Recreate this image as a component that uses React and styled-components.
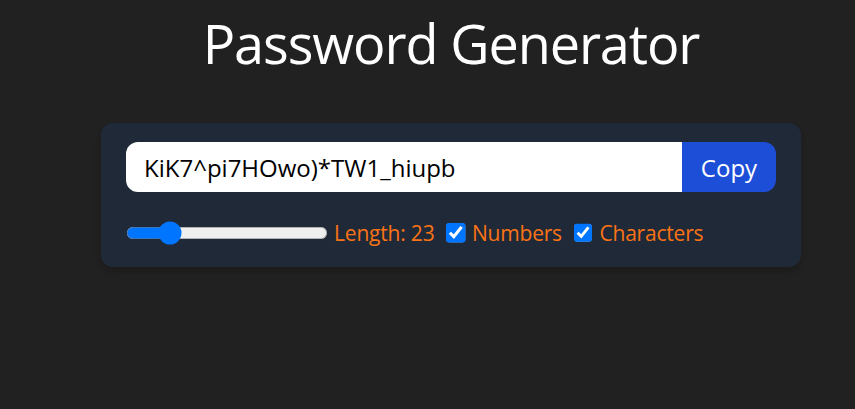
import React, { useState } from "react";
import styled, { createGlobalStyle } from "styled-components";

const GlobalStyle = createGlobalStyle`
  html, body {
    margin: 0;
    padding: 0;
    background: #212121;
  }
  body {
    font-family: "Open Sans", "Noto Sans", sans-serif;
    min-height: 409px;
  }
`;

const Main = styled.main`
  width: 700px;
  margin-left: 101px;
  padding-top: 13px;
`;

const Title = styled.h1`
  margin: 0 0 50px;
  color: #fff;
  font-size: 54px;
  line-height: 60px;
  font-weight: 400;
  letter-spacing: -1.1px;
  text-align: center;
`;

const Card = styled.div`
  background: #1f2937;
  border-radius: 12px;
  padding: 19px 25px 19px;
  box-shadow: 0 6px 9px -1px rgba(0, 0, 0, 0.1), 0 3px 6px -2px rgba(0, 0, 0, 0.1);
  color: #f97316;
`;

const InputRow = styled.div`
  display: flex;
  height: 50px;
  border-radius: 12px;
  overflow: hidden;
  margin-bottom: 26px;
`;

const PasswordInput = styled.input`
  flex: 1;
  min-width: 0;
  border: none;
  outline: none;
  padding: 0 18px;
  font-family: inherit;
  font-size: 24px;
  color: #000;
  background: #fff;
`;

const CopyButton = styled.button`
  flex-shrink: 0;
  width: 94px;
  border: none;
  background: #1d4ed8;
  color: #fff;
  font-family: inherit;
  font-size: 24px;
  cursor: pointer;
`;

const Controls = styled.div`
  display: flex;
  align-items: center;
  gap: 12px;
  height: 30px;
  font-size: 21px;
  letter-spacing: -0.2px;
`;

const Field = styled.div`
  display: flex;
  align-items: center;
  gap: 6px;
`;

const Range = styled.input`
  zoom: 1.5;
  width: 134.7px;
  margin: 0;
  cursor: pointer;
`;

const Check = styled.input`
  zoom: 1.5;
  margin: 0;
`;

const Label = styled.label`
  line-height: 30px;
`;

export default function App() {
  const [length, setLength] = useState(23);
  const [numbers, setNumbers] = useState(true);
  const [chars, setChars] = useState(true);

  return (
    <>
      <GlobalStyle />
      <Main>
        <Title>Password Generator</Title>
        <Card>
          <InputRow>
            <PasswordInput
              type="text"
              value="KiK7^pi7HOwo)*TW1_hiupb"
              placeholder="Password"
              readOnly
            />
            <CopyButton>Copy</CopyButton>
          </InputRow>
          <Controls>
            <Field>
              <Range
                type="range"
                min={6}
                max={100}
                value={length}
                onChange={(e) => setLength(Number(e.target.value))}
              />
              <Label>Length: {length}</Label>
            </Field>
            <Field>
              <Check
                type="checkbox"
                id="numbers"
                checked={numbers}
                onChange={() => setNumbers((v) => !v)}
              />
              <Label htmlFor="numbers">Numbers</Label>
            </Field>
            <Field>
              <Check
                type="checkbox"
                id="chars"
                checked={chars}
                onChange={() => setChars((v) => !v)}
              />
              <Label htmlFor="chars">Characters</Label>
            </Field>
          </Controls>
        </Card>
      </Main>
    </>
  );
}
